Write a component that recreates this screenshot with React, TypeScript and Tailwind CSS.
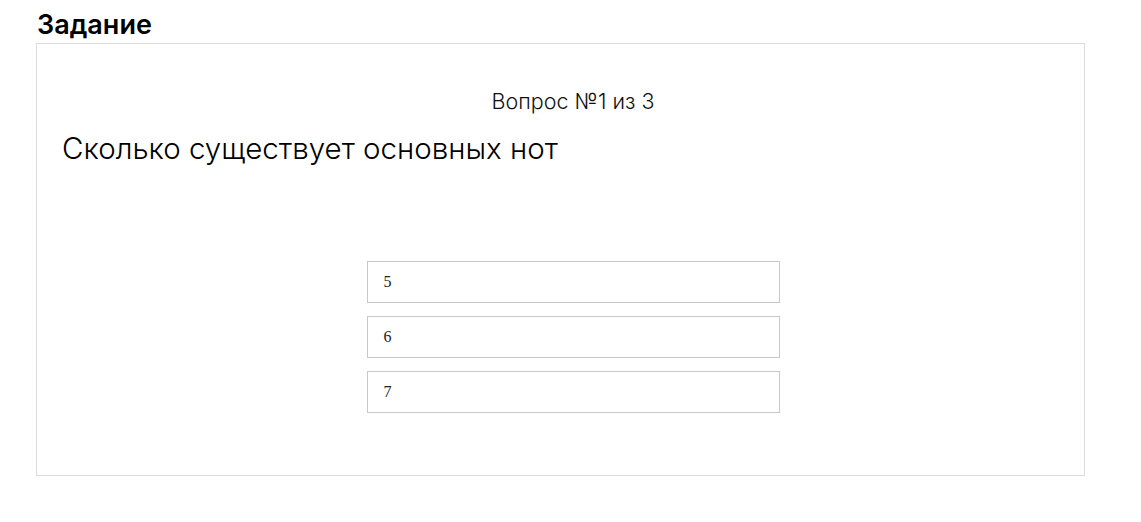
import React from 'react';

const answers = ['5', '6', '7'];

export default function App() {
  return (
    <div className="min-h-screen bg-white pl-[36px] pr-[56px] pt-[6px] font-['Inter','Noto_Sans',sans-serif] text-black">
      <h2 className="text-[27px] leading-[37px] font-semibold pl-[1px]">Задание</h2>
      <div className="border border-[#dcdcdc] h-[433px] pl-[25px] pt-[42px]">
        <p className="text-center text-[21.5px] leading-[30px] font-light text-[#111]">Вопрос №1 из 3</p>
        <p className="mt-[11px] text-[29.5px] leading-[42px] font-light">Сколько существует основных нот</p>
        <div className="mt-[92px] flex flex-col items-center gap-[13px]">
          {answers.map(a => (
            <div
              key={a}
              className="w-[413px] h-[42px] border border-[#c8c8c8] flex items-center pl-[16px] font-['Liberation_Serif',serif] text-[16px] text-[#222]"
            >
              {a}
            </div>
          ))}
        </div>
      </div>
    </div>
  );
}
